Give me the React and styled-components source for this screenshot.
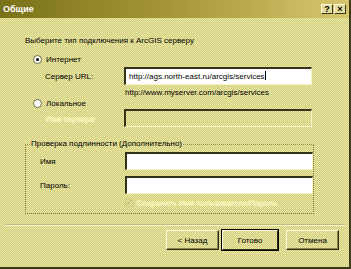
import React from "react";
import styled, { createGlobalStyle } from "styled-components";

const Global = createGlobalStyle`
  html, body { margin: 0; padding: 0; background: #dcd893; }
  body { font-family: "Liberation Sans", Arial, sans-serif; font-size: 8px; }
`;

const Window = styled.div`
  width: 351px;
  height: 269px;
  box-sizing: border-box;
  border-right: 2px solid #3c3a18;
  border-bottom: 2px solid #3c3a18;
  background: repeating-conic-gradient(#cbc78c 0 25%, #f1ee98 0 50%) 0 0 / 2px 2px;
  display: flex;
  flex-direction: column;
`;

const TitleBar = styled.div`
  height: 18px;
  display: flex;
  align-items: center;
  justify-content: space-between;
  padding: 0 3px 0 3px;
  background: linear-gradient(90deg, #7a7218 0%, #a29434 45%, #d8c66e 100%);
`;

const Title = styled.span`
  color: #fff;
  font-weight: bold;
  font-size: 9px;
`;

const TitleButtons = styled.div`
  display: flex;
  gap: 1px;
`;

const TitleButton = styled.div`
  width: 12px;
  height: 10px;
  box-sizing: border-box;
  background: #e4dc9c;
  border: 1px solid;
  border-color: #fffbe0 #3a3818 #3a3818 #fffbe0;
  font-size: 9px;
  font-weight: bold;
  line-height: 8px;
  text-align: center;
  color: #000;
`;

const Body = styled.div`
  flex: 1;
  display: flex;
  flex-direction: column;
  padding: 18px 0 0 25px;
  color: #000;
`;

const Heading = styled.div`
  height: 10px;
  line-height: 10px;
`;

const RadioRow = styled.div`
  display: flex;
  align-items: center;
  gap: 4px;
  margin: ${(p) => p.$mt}px 0 0 8px;
  height: 10px;
`;

const Radio = styled.span`
  width: 7px;
  height: 7px;
  border-radius: 50%;
  background: #fff;
  border: 1px solid #6c6a44;
  display: flex;
  align-items: center;
  justify-content: center;
  &::after {
    content: "";
    width: 3px;
    height: 3px;
    border-radius: 50%;
    background: ${(p) => (p.$on ? "#000" : "transparent")};
  }
`;

const FieldRow = styled.div`
  display: grid;
  grid-template-columns: ${(p) => p.$label}px 188px;
  align-items: center;
  margin-top: ${(p) => p.$mt}px;
  padding-left: ${(p) => p.$pl}px;
`;

const Label = styled.span`
  color: ${(p) => (p.$disabled ? "#f7f39e" : "#000")};
  text-shadow: ${(p) => (p.$disabled ? "1px 1px 0 #fffde0" : "none")};
`;

const Input = styled.div`
  height: 18px;
  box-sizing: border-box;
  border-top: 2px solid #34321a;
  border-left: 2px solid #34321a;
  border-right: 1px solid #f6f3c4;
  border-bottom: 1px solid #f6f3c4;
  background: ${(p) => (p.$disabled ? "transparent" : "#fff")};
  padding: 0 3px;
  line-height: 15px;
  white-space: nowrap;
  overflow: hidden;
`;

const Caret = styled.span`
  display: inline-block;
  width: 1px;
  height: 9px;
  background: #000;
  vertical-align: -1px;
`;

const Hint = styled.div`
  margin: 3px 0 0 100px;
  line-height: 10px;
`;

const Group = styled.fieldset`
  margin: 12px 0 0 0;
  width: 287px;
  height: 75px;
  box-sizing: border-box;
  border: 1px dotted #8a8640;
  padding: 0 0 0 14px;
  display: flex;
  flex-direction: column;
`;

const Legend = styled.legend`
  padding: 0 1px;
  margin-left: -10px;
  line-height: 10px;
`;

const CheckRow = styled.div`
  display: flex;
  align-items: center;
  gap: 3px;
  margin: 4px 0 0 85px;
`;

const Check = styled.span`
  width: 8px;
  height: 8px;
  box-sizing: border-box;
  border: 1px solid #d0cc80;
  color: #b8b47a;
  font-size: 8px;
  line-height: 6px;
  text-align: center;
`;

const Separator = styled.div`
  margin: 10px 0 0 -20px;
  width: 340px;
  height: 0;
  border-top: 1px solid #bdb983;
  border-bottom: 1px solid #fbf8c8;
`;

const Buttons = styled.div`
  display: flex;
  justify-content: flex-end;
  margin: 4px 10px 0 0;
`;

const Button = styled.div`
  width: ${(p) => (p.$def ? 56 : 53)}px;
  height: 20px;
  box-sizing: border-box;
  margin-left: ${(p) => p.$ml}px;
  display: flex;
  align-items: center;
  justify-content: center;
  border: 1px solid;
  border-color: #fffbe0 #2c2a10 #2c2a10 #fffbe0;
  box-shadow: ${(p) => (p.$def ? "0 0 0 1px #000" : "inset -1px -1px 0 #8c8850")};
  color: #000;
`;

export default function App() {
  return (
    <Window>
      <Global />
      <TitleBar>
        <Title>Общие</Title>
        <TitleButtons>
          <TitleButton>?</TitleButton>
          <TitleButton>×</TitleButton>
        </TitleButtons>
      </TitleBar>
      <Body>
        <Heading>Выберите тип подключения к ArcGIS серверу</Heading>
        <RadioRow $mt={8}>
          <Radio $on />
          <span>Интернет</span>
        </RadioRow>
        <FieldRow $label={79} $pl={20} $mt={3}>
          <Label>Сервер URL:</Label>
          <Input>
            http://ags.north-east.ru/arcgis/services<Caret />
          </Input>
        </FieldRow>
        <Hint>http://www.myserver.com/arcgis/services</Hint>
        <RadioRow $mt={0}>
          <Radio />
          <span>Локальное</span>
        </RadioRow>
        <FieldRow $label={79} $pl={20} $mt={1}>
          <Label $disabled>Имя сервера:</Label>
          <Input $disabled />
        </FieldRow>
        <Group>
          <Legend>Проверка подлинности (Дополнительно)</Legend>
          <FieldRow $label={85} $pl={0} $mt={3}>
            <Label>Имя</Label>
            <Input />
          </FieldRow>
          <FieldRow $label={85} $pl={0} $mt={6}>
            <Label>Пароль:</Label>
            <Input />
          </FieldRow>
          <CheckRow>
            <Check>✓</Check>
            <Label $disabled>Сохранить Имя пользователя/Пароль</Label>
          </CheckRow>
        </Group>
        <Separator />
        <Buttons>
          <Button $ml={0}>&lt; Назад</Button>
          <Button $def $ml={3}>Готово</Button>
          <Button $ml={8}>Отмена</Button>
        </Buttons>
      </Body>
    </Window>
  );
}
